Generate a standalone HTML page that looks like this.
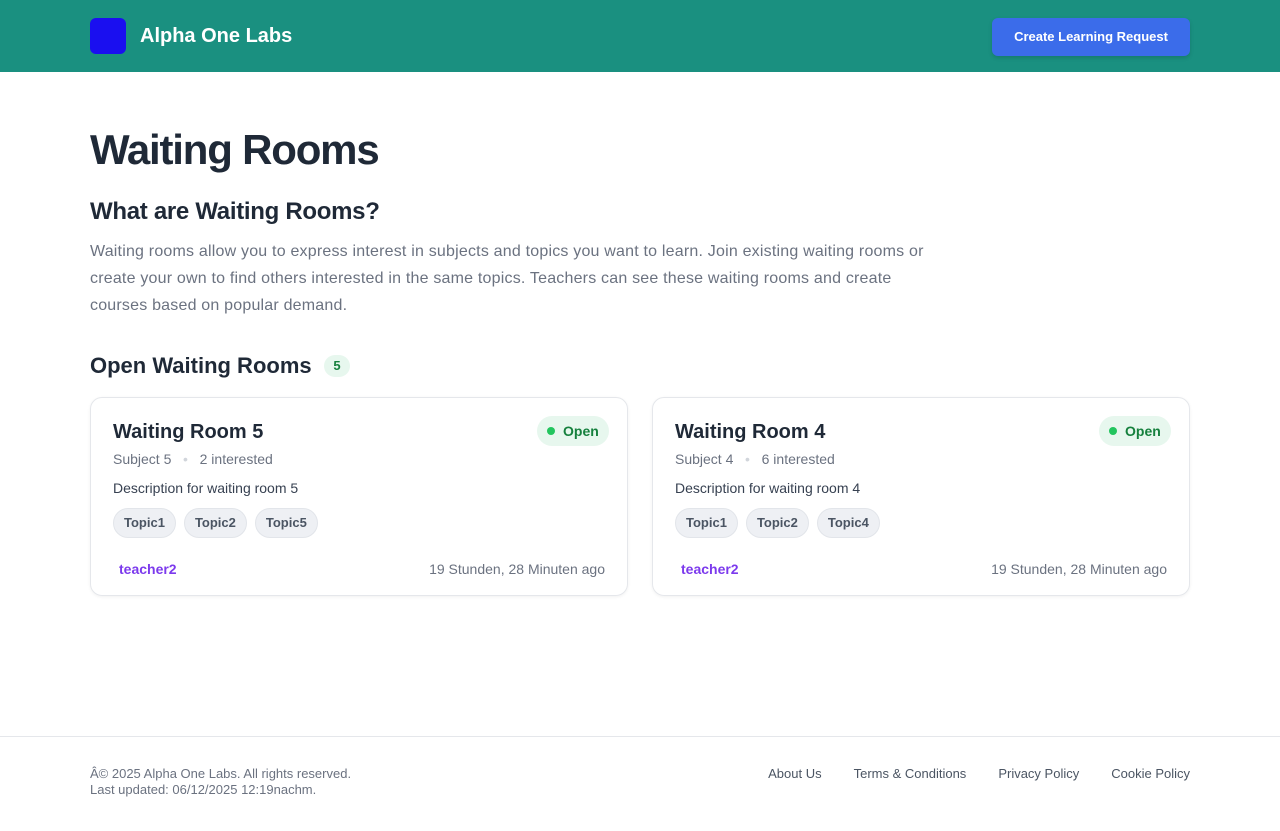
<!DOCTYPE html>
<html><head><meta charset="utf-8"><style>
*{box-sizing:border-box;margin:0;padding:0}
body{width:1280px;height:831px;background:#fff;font-family:"Liberation Sans",sans-serif;color:#1f2937;position:relative;overflow:hidden}
.hdr{height:72px;background:#1a9080;position:relative}
.logo{position:absolute;left:90px;top:18px;width:36px;height:36px;background:#1a0ff0;border-radius:6px}
.brand{position:absolute;left:140px;top:25px;color:#fff;font-weight:bold;font-size:20px}
.btn{position:absolute;left:992px;top:18px;width:198px;height:38px;background:#3b6cea;border-radius:6px;color:#fff;font-weight:bold;font-size:13px;text-align:center;line-height:38px;box-shadow:0 2px 4px rgba(0,0,0,.15)}
h1{position:absolute;left:90px;top:126px;font-size:42px;font-weight:bold;letter-spacing:-1.2px}
h2{position:absolute;left:90px;top:198px;font-size:24px;font-weight:bold;letter-spacing:-0.3px}
.p{position:absolute;left:90px;top:238px;width:868px;font-size:16px;line-height:27px;color:#6b7280;letter-spacing:0.2px}
h3{position:absolute;left:90px;top:353px;font-size:22px;font-weight:bold}
.cnt{position:absolute;left:324px;top:355px;width:26px;height:22px;border-radius:11px;background:#e7f7ee;color:#15803d;font-size:13px;font-weight:bold;text-align:center;line-height:22px}
.card{position:absolute;top:397px;width:538px;height:199px;border:1px solid #e5e7eb;border-radius:12px;box-shadow:0 1px 3px rgba(0,0,0,.06)}
.card .t{position:absolute;left:22px;top:23px;font-size:20px;font-weight:bold}
.card .s{position:absolute;left:22px;top:53px;font-size:14px;color:#6b7280}
.card .d{position:absolute;left:22px;top:82px;font-size:14px;color:#374151}
.tags{position:absolute;left:22px;top:110px;display:flex;gap:8px}
.tag{height:30px;padding:0 10px;border-radius:15px;background:#eef0f4;border:1px solid #e2e5ea;font-size:13px;font-weight:bold;color:#4b5563;line-height:28px}
.open{position:absolute;right:18px;top:18px;width:72px;height:30px;border-radius:15px;background:#e7f7ee;color:#15803d;font-size:14px;font-weight:bold;line-height:30px;padding-left:26px}
.open:before{content:"";position:absolute;left:10px;top:11px;width:8px;height:8px;border-radius:50%;background:#22c55e}
.u{position:absolute;left:28px;top:163px;font-size:14px;font-weight:bold;color:#7c3aed}
.ago{position:absolute;right:22px;top:163px;font-size:14px;color:#6b7280}
.foot{position:absolute;top:736px;left:0;width:1280px;border-top:1px solid #e5e7eb}
.fl{position:absolute;left:90px;top:766px;font-size:13px;color:#6b7280;line-height:16px}
.fr{position:absolute;right:90px;top:766px;font-size:13px;color:#4b5563;display:flex;gap:32px}
</style></head><body>
<div class="hdr"><div class="logo"></div><div class="brand">Alpha One Labs</div><div class="btn">Create Learning Request</div></div>
<h1>Waiting Rooms</h1>
<h2>What are Waiting Rooms?</h2>
<div class="p">Waiting rooms allow you to express interest in subjects and topics you want to learn. Join existing waiting rooms or<br>create your own to find others interested in the same topics. Teachers can see these waiting rooms and create<br>courses based on popular demand.</div>
<h3>Open Waiting Rooms</h3><div class="cnt">5</div>
<div class="card" style="left:90px"><div class="t">Waiting Room 5</div><div class="open">Open</div><div class="s">Subject 5 &nbsp;&nbsp;<span style="color:#d1d5db">•</span>&nbsp;&nbsp; 2 interested</div><div class="d">Description for waiting room 5</div><div class="tags"><span class="tag">Topic1</span><span class="tag">Topic2</span><span class="tag">Topic5</span></div><div class="u">teacher2</div><div class="ago">19 Stunden, 28 Minuten ago</div></div>
<div class="card" style="left:652px"><div class="t">Waiting Room 4</div><div class="open">Open</div><div class="s">Subject 4 &nbsp;&nbsp;<span style="color:#d1d5db">•</span>&nbsp;&nbsp; 6 interested</div><div class="d">Description for waiting room 4</div><div class="tags"><span class="tag">Topic1</span><span class="tag">Topic2</span><span class="tag">Topic4</span></div><div class="u">teacher2</div><div class="ago">19 Stunden, 28 Minuten ago</div></div>
<div class="foot"></div>
<div class="fl">Â© 2025 Alpha One Labs. All rights reserved.<br>Last updated: 06/12/2025 12:19nachm.</div>
<div class="fr"><span>About Us</span><span>Terms &amp; Conditions</span><span>Privacy Policy</span><span>Cookie Policy</span></div>
</body></html>
